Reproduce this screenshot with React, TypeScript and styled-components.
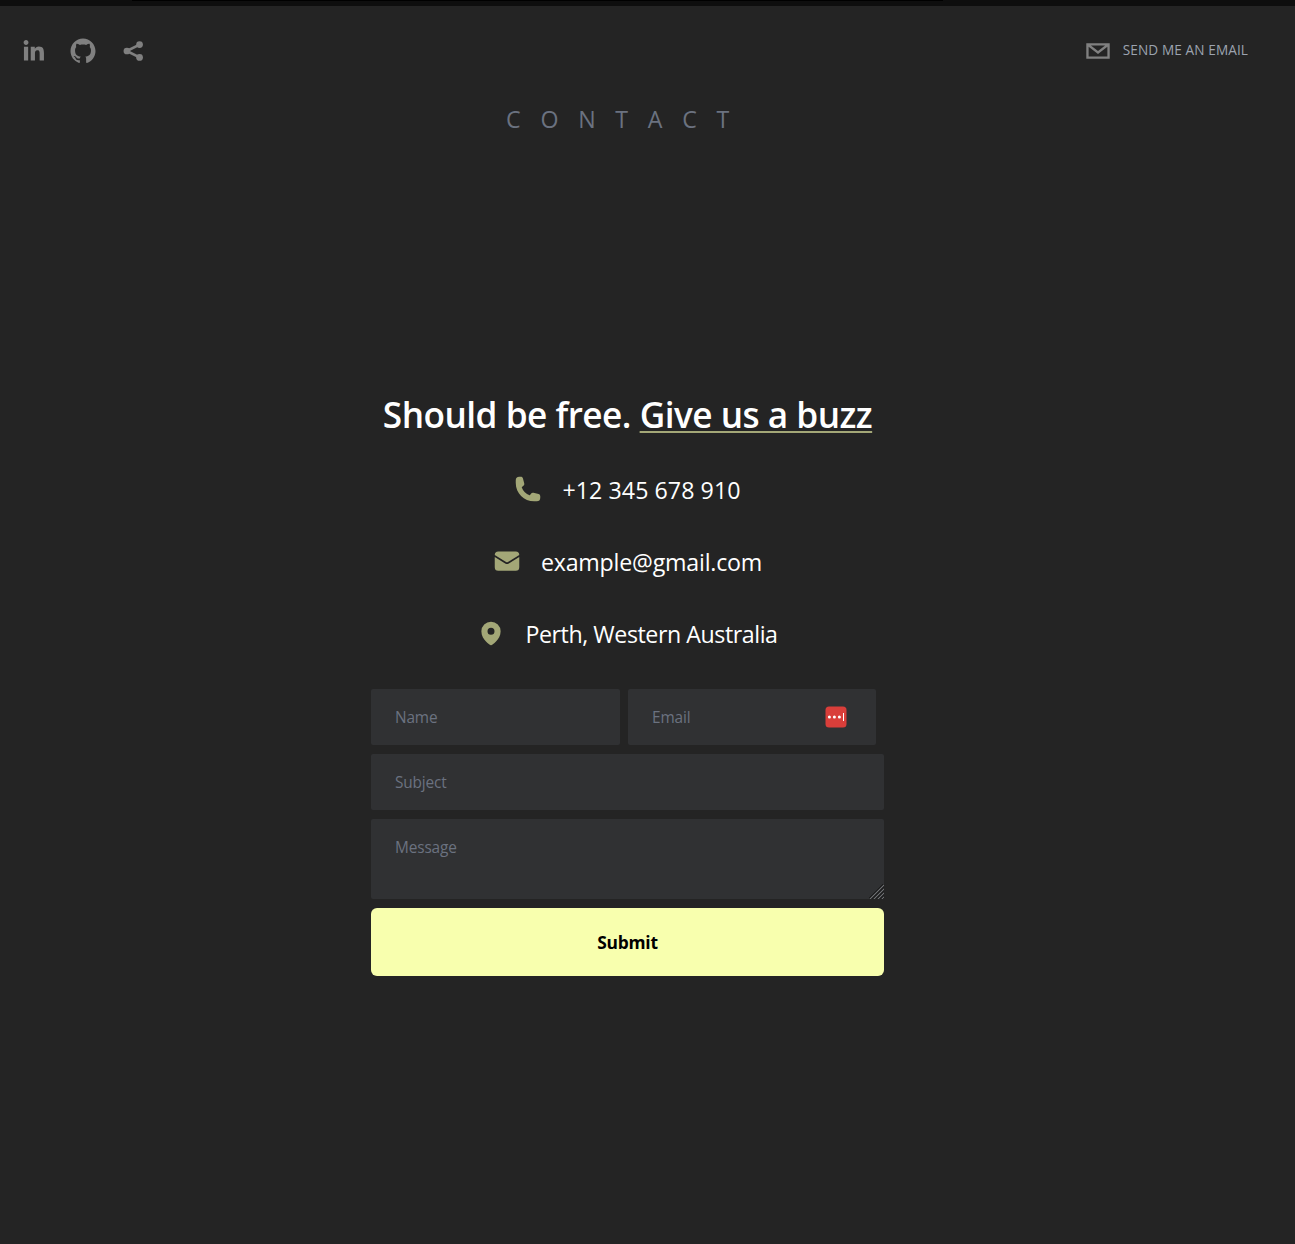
import React from "react";
import styled, { createGlobalStyle } from "styled-components";

const GlobalStyle = createGlobalStyle`
  *, *::before, *::after { box-sizing: border-box; }
  html { overflow: hidden; }
  body {
    margin: 0;
    background: #242424;
    color: #fff;
    font-family: "Open Sans", "Noto Sans", sans-serif;
  }
`;

const Page = styled.div`
  height: 1244px;
  display: flex;
  flex-direction: column;
  overflow: hidden;
`;

const TopStrip = styled.div`
  flex: none;
  height: 6px;
  padding-left: 132px;
  background: #0e0e0e;

  &::before {
    content: "";
    display: block;
    width: 811px;
    height: 1px;
    background: #000;
  }
`;

const Header = styled.header`
  display: flex;
  justify-content: space-between;
  height: 90px;
  padding: 20px 47px 20px 8px;
`;

const Socials = styled.nav`
  display: flex;
`;

const SocialIcon = styled.svg`
  display: block;
  width: 50px;
  height: 50px;
  fill: #808080;
`;

const EmailLink = styled.a`
  display: flex;
  align-items: center;
  color: #9ca3af;
  font-size: 13.6px;
  line-height: 20px;
  letter-spacing: 0.1px;
  white-space: nowrap;

  span { padding-bottom: 2px; }
`;

const Main = styled.main`
  display: flex;
  flex-direction: column;
  align-items: center;
  padding-right: 40px;
`;

const SectionTitle = styled.h3`
  margin: 7px 0 0;
  height: 32px;
  color: #6b7280;
  font-size: 23.2px;
  font-weight: 400;
  line-height: 32px;
  letter-spacing: 19.7px;
`;

const Heading = styled.h4`
  margin: 259px 0 0;
  height: 40px;
  font-size: 35.2px;
  font-weight: 600;
  line-height: 40px;
  letter-spacing: -0.51px;
  white-space: nowrap;
`;

const Accent = styled.span`
  text-decoration: underline;
  text-decoration-color: #a3a777;
  text-decoration-thickness: 2px;
  text-underline-offset: 3px;
  text-decoration-skip-ink: none;
`;

const Details = styled.div`
  display: flex;
  flex-direction: column;
  gap: 40px;
  margin-top: 40px;
`;

const Detail = styled.div`
  display: flex;
  align-items: center;
  justify-content: center;
  gap: 20px;
  height: 32px;
`;

const DetailIcon = styled.svg`
  width: 28px;
  height: 28px;
  fill: #a3a777;
  margin-top: -2px;
`;

const DetailText = styled.p<{ $tracking: number }>`
  margin: 0;
  font-size: 23.2px;
  line-height: 32px;
  letter-spacing: ${(p) => p.$tracking}px;
  white-space: nowrap;
`;

const Form = styled.form`
  display: flex;
  flex-direction: column;
  gap: 9px;
  width: 513px;
  margin-top: 39px;
`;

const FieldRow = styled.div`
  display: grid;
  grid-template-columns: 249px 248px;
  gap: 8px;
`;

const fieldStyle = `
  display: block;
  width: 100%;
  margin: 0;
  padding: 16px 24px;
  border: 0;
  border-radius: 2px;
  outline: none;
  background: #303133;
  color: #f7ffae;
  font: 400 15.4px/22px "Open Sans", "Noto Sans", sans-serif;
  letter-spacing: -0.14px;
  &::placeholder { color: #6b7280; opacity: 1; }
`;

const Input = styled.input`
  ${fieldStyle}
  height: 56px;
`;

const TextArea = styled.textarea`
  ${fieldStyle}
  height: 80px;
  padding-top: 18px;
  resize: none;
`;

const FieldWrap = styled.div`
  position: relative;
`;

const PasswordBadge = styled.svg`
  position: absolute;
  top: 17px;
  right: 29px;
  width: 22px;
  height: 22px;
`;

const ResizeGrip = styled.svg`
  position: absolute;
  right: 0;
  bottom: 0;
  width: 15px;
  height: 15px;
`;

const Submit = styled.button`
  height: 68px;
  padding: 0;
  border: 0;
  border-radius: 6px;
  background: #f8ffae;
  color: #000;
  font: 700 17.4px/28px "Open Sans", "Noto Sans", sans-serif;
  letter-spacing: -0.25px;
`;

export default function App() {
  return (
    <Page>
      <GlobalStyle />
      <TopStrip />
      <Header>
        <Socials>
          <SocialIcon viewBox="0 0 64 64" aria-label="LinkedIn">
            <path d="M20.4,44h5.4V26.6h-5.4V44z M23.1,18c-1.7,0-3.1,1.4-3.1,3.1c0,1.7,1.4,3.1,3.1,3.1 c1.7,0,3.1-1.4,3.1-3.1C26.2,19.4,24.8,18,23.1,18z M39.5,26.2c-2.6,0-4.4,1.4-5.1,2.8h-0.1v-2.4h-5.2V44h5.4v-8.6 c0-2.3,0.4-4.5,3.2-4.5c2.8,0,2.8,2.6,2.8,4.6V44H46v-9.5C46,29.8,45,26.2,39.5,26.2z" />
          </SocialIcon>
          <SocialIcon viewBox="0 0 64 64" aria-label="GitHub">
            <path d="M32,16c-8.8,0-16,7.2-16,16c0,7.1,4.6,13.1,10.9,15.2 c0.8,0.1,1.1-0.3,1.1-0.8c0-0.4,0-1.4,0-2.7c-4.5,1-5.4-2.1-5.4-2.1c-0.7-1.8-1.8-2.3-1.8-2.3c-1.5-1,0.1-1,0.1-1 c1.6,0.1,2.5,1.6,2.5,1.6c1.4,2.4,3.7,1.7,4.7,1.3c0.1-1,0.6-1.7,1-2.1c-3.6-0.4-7.3-1.8-7.3-7.9c0-1.7,0.6-3.2,1.6-4.3 c-0.2-0.4-0.7-2,0.2-4.2c0,0,1.3-0.4,4.4,1.6c1.3-0.4,2.6-0.5,4-0.5c1.4,0,2.7,0.2,4,0.5c3.1-2.1,4.4-1.6,4.4-1.6 c0.9,2.2,0.3,3.8,0.2,4.2c1,1.1,1.6,2.5,1.6,4.3c0,6.1-3.7,7.5-7.3,7.9c0.6,0.5,1.1,1.5,1.1,3c0,2.1,0,3.9,0,4.4 c0,0.4,0.3,0.9,1.1,0.8C43.4,45.1,48,39.1,48,32C48,23.2,40.8,16,32,16z" />
          </SocialIcon>
          <SocialIcon viewBox="0 0 64 64" aria-label="Share">
            <path d="M40.4 23.8L24 32L40.4 40.2" fill="none" stroke="#808080" strokeWidth="3.4" />
            <circle cx="40.4" cy="23.8" r="4.3" />
            <circle cx="24.2" cy="32" r="4.3" />
            <circle cx="40.4" cy="40.2" r="4.3" />
          </SocialIcon>
        </Socials>
        <EmailLink>
          <SocialIcon viewBox="0 0 64 64" aria-label="Email">
            <path d="M17,22v20h30V22H17z M41.1,25L32,32.1L22.9,25H41.1z M20,39V26.6l12,9.3l12-9.3V39H20z" />
          </SocialIcon>
          <span>SEND ME AN EMAIL</span>
        </EmailLink>
      </Header>
      <Main>
        <SectionTitle>CONTACT</SectionTitle>
        <Heading>
          Should be free. <Accent>Give us a buzz</Accent>
        </Heading>
        <Details>
          <Detail>
            <DetailIcon viewBox="0 0 24 24">
              <path fillRule="evenodd" clipRule="evenodd" d="M1.5 4.5a3 3 0 013-3h1.372c.86 0 1.61.586 1.819 1.42l1.105 4.423a1.875 1.875 0 01-.694 1.955l-1.293.97c-.135.101-.164.249-.126.352a11.285 11.285 0 006.697 6.697c.103.038.25.009.352-.126l.97-1.293a1.875 1.875 0 011.955-.694l4.423 1.105c.834.209 1.42.959 1.42 1.82V19.5a3 3 0 01-3 3h-2.25C8.552 22.5 1.5 15.448 1.5 6.75V4.5z" />
            </DetailIcon>
            <DetailText $tracking={0.06}>+12 345 678 910</DetailText>
          </Detail>
          <Detail>
            <DetailIcon viewBox="0 0 24 24">
              <path d="M1.5 8.67v8.58a3 3 0 003 3h15a3 3 0 003-3V8.67l-8.928 5.493a3 3 0 01-3.144 0L1.5 8.67z" />
              <path d="M22.5 6.908V6.75a3 3 0 00-3-3h-15a3 3 0 00-3 3v.158l9.714 5.978a1.5 1.5 0 001.572 0L22.5 6.908z" />
            </DetailIcon>
            <DetailText $tracking={-0.2}>example@gmail.com</DetailText>
          </Detail>
          <Detail>
            <DetailIcon viewBox="0 0 24 24">
              <path fillRule="evenodd" clipRule="evenodd" d="M11.54 22.351l.07.04.028.016a.76.76 0 00.723 0l.028-.015.071-.041a16.975 16.975 0 001.144-.742 19.58 19.58 0 002.683-2.282c1.944-1.99 3.963-4.98 3.963-8.827a8.25 8.25 0 00-16.5 0c0 3.846 2.02 6.837 3.963 8.827a19.58 19.58 0 002.682 2.282 16.975 16.975 0 001.145.742zM12 13.5a3 3 0 100-6 3 3 0 000 6z" />
            </DetailIcon>
            <DetailText $tracking={-0.44}>Perth, Western Australia</DetailText>
          </Detail>
        </Details>
        <Form>
          <FieldRow>
            <Input placeholder="Name" />
            <FieldWrap>
              <Input placeholder="Email" />
              <PasswordBadge viewBox="0 0 22 22">
                <rect x="0.5" y="0.5" width="21" height="21" rx="3.5" fill="#d93e3a" />
                <circle cx="4.4" cy="11" r="1.5" fill="#fff" />
                <circle cx="9.4" cy="11" r="1.5" fill="#fff" />
                <circle cx="14.4" cy="11" r="1.5" fill="#fff" />
                <rect x="18" y="7" width="1" height="8" fill="#fff" />
              </PasswordBadge>
            </FieldWrap>
          </FieldRow>
          <Input placeholder="Subject" />
          <FieldWrap>
            <TextArea placeholder="Message" />
            <ResizeGrip viewBox="0 0 15 15">
              <path d="M-1 15L15 -1M3 15L15 3M7 15L15 7M11 15L15 11" stroke="#1c1c1c" strokeWidth="1" />
              <path d="M0.5 15.5L15.5 0.5M4.5 15.5L15.5 4.5M8.5 15.5L15.5 8.5M12.5 15.5L15.5 12.5" stroke="#77787a" strokeWidth="0.9" />
            </ResizeGrip>
          </FieldWrap>
          <Submit type="button">Submit</Submit>
        </Form>
      </Main>
    </Page>
  );
}
